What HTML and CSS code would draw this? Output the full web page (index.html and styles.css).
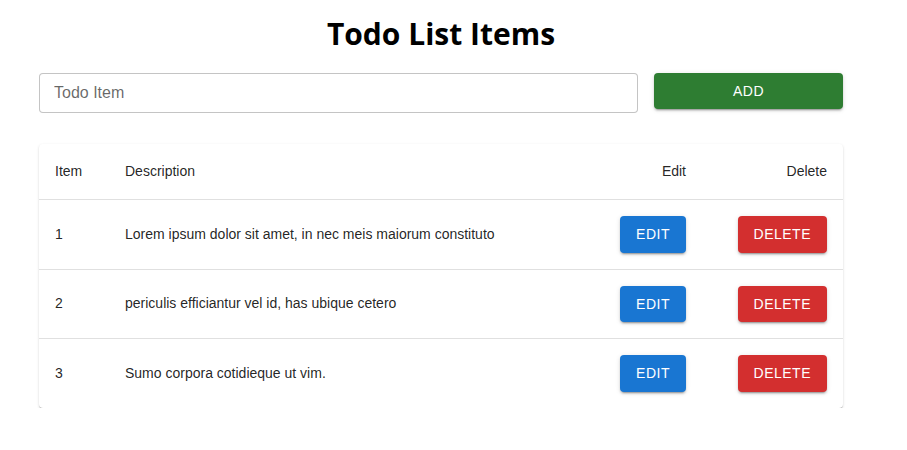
FILE: index.html
```html
<!DOCTYPE html>
<html>
<head>
<meta charset="utf-8">
<link rel="stylesheet" href="styles.css">
</head>
<body>
<div class="container">
  <h1 class="title">Todo List Items</h1>
  <div class="form-row">
    <div class="input-box"><input class="todo-input" type="text" placeholder="Todo Item"></div>
    <button class="btn btn-add">ADD</button>
  </div>
  <div class="card">
    <table class="todo-table">
      <colgroup>
        <col class="c-item"><col class="c-desc"><col class="c-edit"><col class="c-del">
      </colgroup>
      <thead>
        <tr><th>Item</th><th>Description</th><th class="right">Edit</th><th class="right">Delete</th></tr>
      </thead>
      <tbody>
        <tr><td>1</td><td>Lorem ipsum dolor sit amet, in nec meis maiorum constituto</td><td class="right"><button class="btn btn-edit">EDIT</button></td><td class="right"><button class="btn btn-delete">DELETE</button></td></tr>
        <tr><td>2</td><td>periculis efficiantur vel id, has ubique cetero</td><td class="right"><button class="btn btn-edit">EDIT</button></td><td class="right"><button class="btn btn-delete">DELETE</button></td></tr>
        <tr class="last"><td>3</td><td>Sumo corpora cotidieque ut vim.</td><td class="right"><button class="btn btn-edit">EDIT</button></td><td class="right"><button class="btn btn-delete">DELETE</button></td></tr>
      </tbody>
    </table>
  </div>
</div>
</body>
</html>
```
FILE: styles.css
```css
* { box-sizing: border-box; }
body {
  margin: 0;
  background: #fff;
  font-family: "Liberation Sans", Arial, sans-serif;
  color: rgba(0,0,0,0.87);
}
.container {
  width: 804px;
  margin-left: 39px;
  padding-top: 14px;
}
.title {
  margin: 0;
  text-align: center;
  font-family: "Open Sans", sans-serif;
  font-weight: 700;
  font-size: 30px;
  line-height: 40px;
  color: #000;
}
.form-row {
  display: flex;
  gap: 16px;
  align-items: flex-start;
  margin-top: 19px;
}
.input-box {
  width: 599px;
}
.todo-input {
  display: block;
  width: 100%;
  height: 40px;
  border: 1px solid rgba(0,0,0,0.23);
  border-radius: 4px;
  padding: 0 14px;
  font-family: "Liberation Sans", Arial, sans-serif;
  font-size: 16px;
  color: rgba(0,0,0,0.87);
  outline: none;
}
.todo-input::placeholder { color: rgba(0,0,0,0.6); }
.btn {
  border: none;
  border-radius: 4px;
  color: #fff;
  font-family: "Liberation Sans", Arial, sans-serif;
  font-size: 14px;
  letter-spacing: 0.5px;
  line-height: 24.5px;
  padding: 6px 16px;
  cursor: pointer;
  vertical-align: middle;
  box-shadow: 0 3px 1px -2px rgba(0,0,0,0.2), 0 2px 2px 0 rgba(0,0,0,0.14), 0 1px 5px 0 rgba(0,0,0,0.12);
}
.btn-add {
  width: 189px;
  height: 36px;
  background: #2e7d32;
}
.btn-edit { background: #1976d2; }
.btn-delete { background: #d32f2f; }
.card {
  margin-top: 31px;
  border-radius: 4px;
  background: #fff;
  box-shadow: 0 2px 1px -1px rgba(0,0,0,0.2), 0 1px 1px 0 rgba(0,0,0,0.14), 0 1px 3px 0 rgba(0,0,0,0.12);
  overflow: hidden;
}
.todo-table {
  width: 100%;
  border-collapse: collapse;
  table-layout: fixed;
  font-size: 14px;
}
.c-item { width: 70px; }
.c-edit { width: 120px; }
.c-del { width: 141px; }
.todo-table th, .todo-table td {
  padding: 16px;
  text-align: left;
  font-weight: 400;
  line-height: 23px;
  border-bottom: 1px solid rgb(224,224,224);
  vertical-align: middle;
}
.todo-table tbody td { height: 69px; }
.todo-table tr.last td { border-bottom: none; }
.todo-table .right { text-align: right; }
```
